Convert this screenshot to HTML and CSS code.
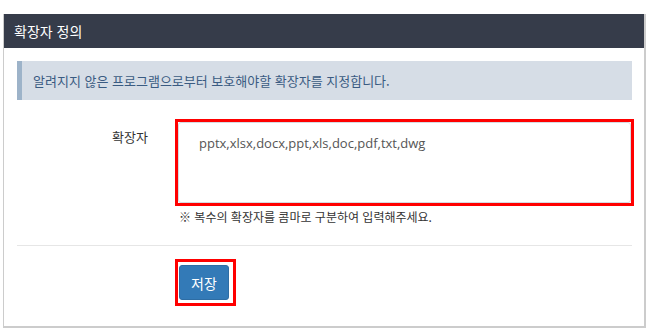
FILE: index.html
```html
<!DOCTYPE html>
<html lang="ko">

<head>
    <meta charset="UTF-8">
    <meta name="viewport" content="width=device-width, initial-scale=1.0">
    <title>확장자 정의</title>
    <link rel="stylesheet" href="styles.css">
</head>

<body>

    <div class="panel">
        <div class="panel-heading">확장자 정의</div>

        <div class="panel-body">
            <!-- 안내 -->
            <div class="alert">알려지지 않은 프로그램으로부터 보호해야할 확장자를 지정합니다.</div>

            <!-- 확장자 입력 -->
            <div class="form-row">
                <label for="ext" class="form-label">확장자</label>
                <div class="form-field">
                    <div class="mark">
                        <textarea id="ext" class="form-control">pptx,xlsx,docx,ppt,xls,doc,pdf,txt,dwg</textarea>
                    </div>
                    <p class="help">※ 복수의 확장자를 콤마로 구분하여 입력해주세요.</p>
                </div>
            </div>

            <hr class="divider">

            <!-- 저장 -->
            <div class="form-row">
                <div></div>
                <div class="form-field">
                    <div class="mark mark-btn">
                        <button class="btn">저장</button>
                    </div>
                </div>
            </div>
        </div>
    </div>

</body>

</html>
```

FILE: styles.css
```css
body {
    font-family: 'Noto Sans CJK KR', sans-serif;
    background-color: #fff;
    color: #333;
    margin: 0;
    padding: 0;
}

.panel {
    margin: 14px 0 0 3px;
    width: 640px;
    border-left: 1px solid #ccc;
    border-right: 2px solid #ccc;
    border-bottom: 2px solid #ccc;
}

.panel-heading {
    background-color: #363c4a;
    color: #fff;
    font-size: 14px;
    line-height: 34px;
    height: 34px;
    padding-left: 10px;
}

.panel-body {
    padding: 13px 12px 20px 13px;
}

.alert {
    background-color: #d6dde6;
    border-left: 5px solid #9db3c9;
    color: #3a5b82;
    font-size: 13px;
    line-height: 17px;
    padding: 11px 0 11px 11px;
}

.form-row {
    display: grid;
    grid-template-columns: 131px 459px;
    column-gap: 27px;
}

.form-row:first-of-type {
    margin-top: 19px;
}

.alert + .form-row {
    margin-top: 19px;
}

.form-label {
    text-align: right;
    font-size: 13px;
    line-height: 20px;
    padding-top: 8px;
    color: #333;
}

.mark {
    border: 3px solid #ff0000;
}

.form-control {
    display: block;
    box-sizing: border-box;
    width: 100%;
    height: 81px;
    margin: 0;
    border: 1px solid #d5dbe2;
    border-radius: 3px;
    padding: 11px 20px;
    font-family: 'Open Sans', 'Noto Sans CJK KR', sans-serif;
    font-size: 13px;
    line-height: 18px;
    color: #555;
    resize: none;
    /* 스크롤바 숨김 */
    overflow: hidden;
}

.help {
    margin: 3px 0 0 4px;
    font-size: 12px;
    line-height: 16px;
    color: #333;
}

.divider {
    border: none;
    border-top: 1px solid #e6e6e6;
    margin: 20px 0 13px;
}

.mark-btn {
    display: inline-block;
    padding: 3px 4px 3px 1px;
}

.btn {
    display: block;
    width: 50px;
    height: 35px;
    border: 1px solid #2e6da4;
    border-radius: 3px;
    background-color: #337ab7;
    color: #fff;
    font-family: 'Noto Sans CJK KR', sans-serif;
    font-size: 14px;
    padding: 0;
}
```
